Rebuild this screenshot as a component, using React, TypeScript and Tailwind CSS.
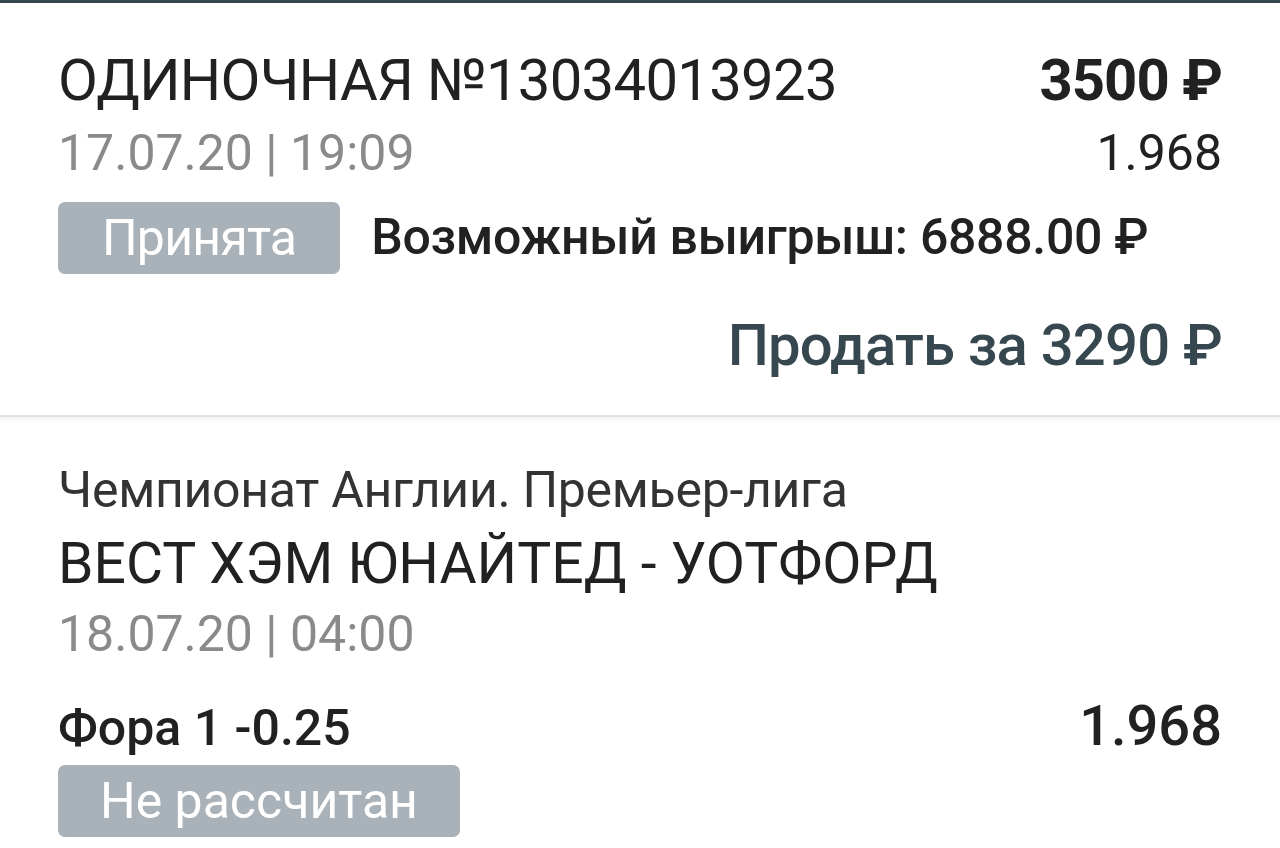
export default function App() {
  return (
    <div className="min-h-screen bg-white font-['Roboto',sans-serif] text-[#212121]">
      {/* Bet summary card */}
      <section className="border-t-[3px] border-[#37474f] px-[58px] pt-[41px] pb-[34px]">
        <div className="flex h-[72px] items-baseline justify-between leading-[72px]">
          <span className="text-[58px] tracking-[-0.7px]">ОДИНОЧНАЯ №13034013923</span>
          <span className="text-[58px] font-bold tracking-[-1px]">3500 ₽</span>
        </div>
        <div className="mt-[2px] flex h-[70px] items-baseline justify-between leading-[70px]">
          <span className="text-[50px] text-[#8a8a8a]">17.07.20 | 19:09</span>
          <span className="text-[50px]">1.968</span>
        </div>
        <div className="mt-[12px] flex items-center gap-[31px]">
          <span className="h-[72px] rounded-[7px] bg-[#a9b1b9] px-[44px] text-[50px] leading-[72px] tracking-[-0.8px] text-white">
            Принята
          </span>
          <span className="text-[50px] font-medium tracking-[-0.3px]">Возможный выигрыш: 6888.00 ₽</span>
        </div>
        <div className="mt-[34px] flex h-[72px] justify-end leading-[72px]">
          <span className="text-[58px] font-medium tracking-[-0.8px] text-[#37474f]">Продать за 3290 ₽</span>
        </div>
      </section>

      <div className="h-[2px] bg-[#e2e2e2]" />
      <div className="h-[6px] bg-gradient-to-b from-[#f2f2f2] to-white" />

      {/* Event card */}
      <section className="px-[58px] pt-[37px]">
        <div className="h-[60px] text-[50px] leading-[60px] tracking-[-0.3px] text-[#333]">
          Чемпионат Англии. Премьер-лига
        </div>
        <div className="mt-[8px] h-[72px] text-[57px] leading-[72px]">ВЕСТ ХЭМ ЮНАЙТЕД - УОТФОРД</div>
        <div className="mt-[4px] h-[60px] text-[50px] leading-[60px] text-[#8a8a8a]">18.07.20 | 04:00</div>
        <div className="mt-[26px] flex h-[72px] items-baseline justify-between leading-[72px]">
          <span className="text-[50px] font-medium">Фора 1 -0.25</span>
          <span className="text-[56px] font-medium">1.968</span>
        </div>
        <div className="mt-[3px] flex">
          <span className="h-[72px] rounded-[7px] bg-[#a9b1b9] px-[42px] text-[50px] leading-[72px] text-white">
            Не рассчитан
          </span>
        </div>
      </section>
    </div>
  );
}
